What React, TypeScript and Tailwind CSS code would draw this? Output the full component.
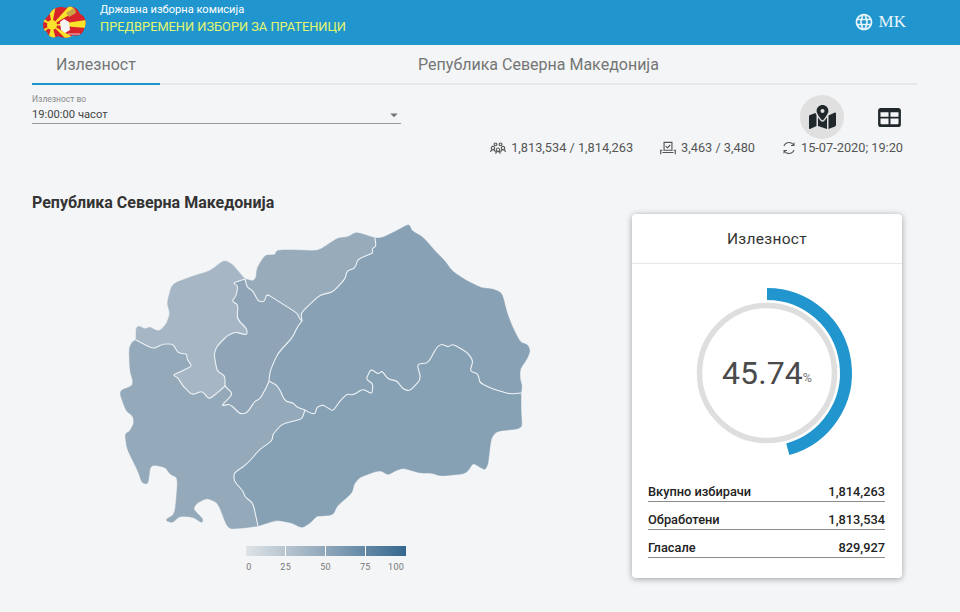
import { MdLanguage, MdArrowDropDown } from "react-icons/md";
import { FaMapMarkedAlt } from "react-icons/fa";
import { LiaUsersSolid, LiaVoteYeaSolid, LiaSyncSolid } from "react-icons/lia";

// shared borders of the regions, map coordinates are page pixels
const outerPolog = "136,339 136,327 139,325 145,328 150,326 155,329 160,330 167,322 170,312 167,302 172,283 193,275 210,270 224,259 232,263 238,270 245,278";
const outerNorth = "245,278 253,280 256,277 257,267 265,254 275,254 277,249 297,249 318,250 330,242 338,237 348,236 356,231 375,237";
const outerEast = "375,237 382,237 400,228 409,223 412,230 423,236 435,250 445,260 452,270 467,280 482,287 493,288 502,292 507,312 512,325 520,341 528,344 530,350 527,358 520,368 520,378 522,385 521,392";
const outerSouthEast = "521,392 521,410 522,425 518,428 497,430 491,437 488,463 485,469 478,465 473,462 468,470 463,473 440,475 432,472 420,472 403,467 395,470 388,474 380,469 360,476 354,483 352,492 337,505 333,514 320,515 317,515 310,522 302,527 292,522 277,519 258,525";
const outerWest = "258,525 243,527 228,528 218,502 207,497 197,502 193,508 203,518 202,522 193,516 180,515 172,522 165,519 175,513 178,477 170,473 165,466 153,464 150,467 148,483 142,482 138,470 127,448 125,433 130,430 134,422 133,415 126,410 119,390 132,385 133,380 130,370 129,348 132,341 136,339";

const polSw = "136,339 153,348 163,343 173,343 178,352 187,353 187,358 192,365 182,370 173,374 178,377 183,385 192,394 202,390 209,398 216,393 225,385";
const polSk = "245,278 233,282 238,285 236,295 232,300 238,304 237,318 247,328 247,334 235,331 227,335 217,345 214,353 217,370 225,375 225,385";
const swSk = "225,385 233,393 221,405 230,403 240,413 247,412 255,400 260,398 267,385 269,380";
const skEast = "269,380 270,370 278,352 292,337 298,325 302,320";
const skNorth = "245,278 247,286 253,290 258,300 264,301 267,293 278,300 297,312 300,318 302,320";
const northEast = "302,320 301,312 310,303 320,294 333,291 345,278 347,270 355,267 358,258 373,252 372,248 376,245 375,237";
const swEast = "269,380 278,385 285,400 293,402 297,406 305,409";
const swSe = "305,409 302,418 282,423 273,433 272,440 260,448 247,463 234,472 234,480 243,490 245,496 253,502 258,525";
const eastSe = "305,409 310,412 315,413 317,406 323,404 328,407 333,410 340,400 347,393 353,394 363,388 372,393 373,383 366,378 371,368 378,373 382,370 388,378 397,380 403,388 410,390 421,378 417,363 428,362 437,346 442,343 448,346 453,343 468,352 473,360 470,370 478,373 480,382 493,388 510,393 521,392";

const rev = (s: string) => s.split(" ").reverse().join(" ");

// softens the corners of a border, gives the same curve in both directions
const curve = (s: string) => {
  const pts = s.split(" ").map((p) => p.split(",").map(Number));
  const toward = (a: number[], b: number[]) => `${a[0] + (b[0] - a[0]) * 0.3} ${a[1] + (b[1] - a[1]) * 0.3}`;
  let d = `L${pts[0][0]} ${pts[0][1]}`;
  for (let i = 1; i < pts.length - 1; i++) {
    d += ` L${toward(pts[i], pts[i - 1])} Q${pts[i][0]} ${pts[i][1]} ${toward(pts[i], pts[i + 1])}`;
  }
  return d + ` L${pts[pts.length - 1][0]} ${pts[pts.length - 1][1]}`;
};

const shape = (segments: string[]) => "M" + segments.map(curve).join(" ").slice(1) + " Z";

const regions = [
  { fill: "#a6b6c4", segments: [outerPolog, polSk, rev(polSw)] },
  { fill: "#97abbb", segments: [outerNorth, rev(northEast), rev(skNorth)] },
  { fill: "#8fa5b7", segments: [polSk, swSk, skEast, rev(skNorth)] },
  { fill: "#94a9b9", segments: [outerWest, polSw, swSk, swEast, swSe] },
  { fill: "#88a1b4", segments: [outerEast, rev(eastSe), rev(swEast), skEast, northEast] },
  { fill: "#86a0b4", segments: [outerSouthEast, rev(swSe), eastSe] },
];

const borders = [polSw, polSk, swSk, skEast, skNorth, northEast, swEast, swSe, eastSe];

const stats = [
  { label: "Вкупно избирачи", value: "1,814,263" },
  { label: "Обработени", value: "1,813,534" },
  { label: "Гласале", value: "829,927" },
];

function Logo() {
  return (
    <svg viewBox="0 0 44 34" className="w-[44px] h-[34px]">
      <defs>
        <clipPath id="blob">
          <path d="M1 20 C1 14 6 12 9 7 C12 2 20 1 24 3 C28 0 36 2 38 9 C44 11 45 19 42 24 C41 29 36 32 31 30 C27 34 19 33 16 31 C12 34 6 32 5 27 C2 26 1 23 1 20 Z" />
        </clipPath>
      </defs>
      <g clipPath="url(#blob)">
        <rect width="44" height="34" fill="#d8232a" />
        <path d="M10 20 L6 0 L14 0 Z M10 20 L28 0 L34 6 Z M10 20 L44 15 L44 23 Z M10 20 L34 34 L24 34 Z M10 20 L14 34 L6 34 Z M10 20 L0 12 L0 16 Z M10 20 L0 25 L0 29 Z" fill="#f9e32b" />
        <circle cx="10" cy="20" r="5" fill="#f9e32b" />
        <path d="M24 8 L32 3 L34 8 L27 12 Z" fill="#c9a24a" />
      </g>
      <path d="M18 17 L22 14 L27 17 L28 25 L23 28 L19 25 Z" fill="#f5f5f5" />
      <path d="M26 29 L38 29" stroke="#f5f5f5" strokeWidth="0.8" />
    </svg>
  );
}

export default function App() {
  return (
    <div className="w-[960px] h-[612px] overflow-hidden bg-[#f3f5f7] font-['Roboto',sans-serif]">
      <header className="h-[45px] bg-[#2196ce] flex items-start pl-[42px] pr-[54px]">
        <div className="pt-[5px]">
          <Logo />
        </div>
        <div className="ml-[14px] pt-[3px]">
          <p className="text-[11.1px] leading-[14px] text-white">Државна изборна комисија</p>
          <p className="text-[12.8px] leading-[19px] text-[#e4f76c]">ПРЕДВРЕМЕНИ ИЗБОРИ ЗА ПРАТЕНИЦИ</p>
        </div>
        <div className="ml-auto flex items-center gap-[5px] pt-[12px] text-[#e8f6fc]">
          <MdLanguage className="w-[20px] h-[20px]" />
          <span className="font-['Liberation_Serif',serif] text-[17px] leading-[20px]">MK</span>
        </div>
      </header>

      <div className="mx-[32px] w-[885px] flex h-[40px] border-b-2 border-[#e6e8ea]">
        <div className="w-[128px] h-[40px] pt-[2px] border-b-2 border-[#2196ce] flex items-center justify-center text-[16px] text-[#757575]">
          Излезност
        </div>
        <div className="flex-1 pt-[2px] flex items-center justify-center text-[16px] text-[#757575]">
          Република Северна Македонија
        </div>
      </div>

      <div className="mx-[32px] w-[885px] flex justify-between h-[100px]">
        <div className="w-[369px] h-[39px] pt-[9px] border-b border-[#9a9a9a]">
          <p className="text-[8.5px] leading-[10px] text-[#8a8a8a]">Излезност во</p>
          <div className="flex items-center justify-between h-[18px] mt-[2px]">
            <span className="text-[11.2px] text-[#444444]">19:00:00 часот</span>
            <MdArrowDropDown className="w-[18px] h-[18px] text-[#757575] mr-[-2px]" />
          </div>
        </div>
        <div className="flex flex-col items-end pt-[10px]">
          <div className="flex items-center mr-[-17px]">
            <div className="w-[44px] h-[44px] rounded-full bg-[#e0e0e0] flex items-center justify-center">
              <FaMapMarkedAlt className="w-[27px] h-[24px] text-[#20282c]" />
            </div>
            <div className="w-[90px] flex justify-center">
              <svg viewBox="0 0 24 20" className="w-[23px] h-[19px]">
                <path fillRule="evenodd" d="M3 0h18a3 3 0 0 1 3 3v14a3 3 0 0 1-3 3H3a3 3 0 0 1-3-3V3a3 3 0 0 1 3-3Zm-.5 4.500v4.700H11V4.500Zm10.500 0v4.700h8.500V4.500ZM2.500 11v5a1 1 0 0 0 1 1H11v-6Zm10.500 0v6h7.500a1 1 0 0 0 1-1v-5Z" fill="#20282c" />
              </svg>
            </div>
          </div>
          <div className="flex items-center text-[12.75px] text-[#555555] mt-[-1px] mr-[14px] h-[20px]">
            <LiaUsersSolid className="w-[18px] h-[18px] mr-[4px]" />
            <span>1,813,534 / 1,814,263</span>
            <LiaVoteYeaSolid className="w-[18px] h-[18px] ml-[26px] mr-[4px]" />
            <span>3,463 / 3,480</span>
            <LiaSyncSolid className="w-[16px] h-[16px] ml-[26px] mr-[4px]" />
            <span>15-07-2020; 19:20</span>
          </div>
        </div>
      </div>

      <div className="flex pl-[32px]">
        <div className="w-[600px]">
          <h2 className="mt-[8px] text-[16px] leading-[20px] font-bold text-[#333333]">Република Северна Македонија</h2>
          <svg viewBox="110 220 430 310" className="block w-[430px] h-[310px] ml-[78px] mt-[8px]">
            {regions.map((r, i) => (
              <path key={i} d={shape(r.segments)} fill={r.fill} stroke={r.fill} strokeWidth="0.5" strokeLinejoin="round" />
            ))}
            {borders.map((b, i) => (
              <path key={i} d={"M" + curve(b).slice(1)} fill="none" stroke="#eef3f6" strokeWidth="1.1" strokeLinejoin="round" />
            ))}
          </svg>
          <div className="ml-[214px] mt-[15px] w-[160px]">
            <div className="h-[10px] flex bg-gradient-to-r from-[#dfe3e6] via-[#8fa7ba] to-[#35688f]">
              <div className="w-[40px] border-r border-white" />
              <div className="w-[40px] border-r border-white" />
              <div className="w-[40px] border-r border-white" />
            </div>
            <div className="flex text-[9px] leading-[12px] text-[#777777] mt-[5px] tracking-[0.3px]">
              <span className="w-[20px] text-center ml-[-7px]">0</span>
              <span className="w-[20px] text-center ml-[17px]">25</span>
              <span className="w-[20px] text-center ml-[20px]">50</span>
              <span className="w-[20px] text-center ml-[20px]">75</span>
              <span className="w-[20px] text-center ml-[11px]">100</span>
            </div>
          </div>
        </div>

        <div className="w-[270px] h-[364px] mt-[29px] bg-white rounded-[4px] shadow-[0_1px_6px_rgba(0,0,0,0.35)] flex flex-col">
          <div className="h-[50px] pt-[2px] shrink-0 flex items-center justify-center border-b border-[#e8e8e8] text-[15.5px] text-[#333333] tracking-[0.3px]">
            Излезност
          </div>
          <div className="relative h-[180px] mt-[19px] shrink-0">
            <svg viewBox="0 0 180 180" className="block w-[180px] h-[180px] ml-[45px]">
              <circle cx="90" cy="90" r="67.5" fill="none" stroke="#dedede" strokeWidth="5.500" />
              <path d="M90 11 A79 79 0 0 1 110.8 166.2" fill="none" stroke="#2196ce" strokeWidth="12" />
            </svg>
            <div className="absolute inset-0 flex items-center justify-center text-[#4a4a4a]">
              <span className="text-[32px] leading-[40px] tracking-[0.1px]">45.74</span>
              <span className="text-[12.5px] mt-[10px] text-[#777777]">%</span>
            </div>
          </div>
          <div className="mt-[11px] ml-[16px] mr-[17px]">
            {stats.map((s) => (
              <div key={s.label} className="flex justify-between h-[28px] pt-[10px] text-[12.8px] leading-[16px] font-medium text-[#222222] border-b border-[#8c8c8c]">
                <span>{s.label}</span>
                <span>{s.value}</span>
              </div>
            ))}
          </div>
        </div>
      </div>
    </div>
  );
}
